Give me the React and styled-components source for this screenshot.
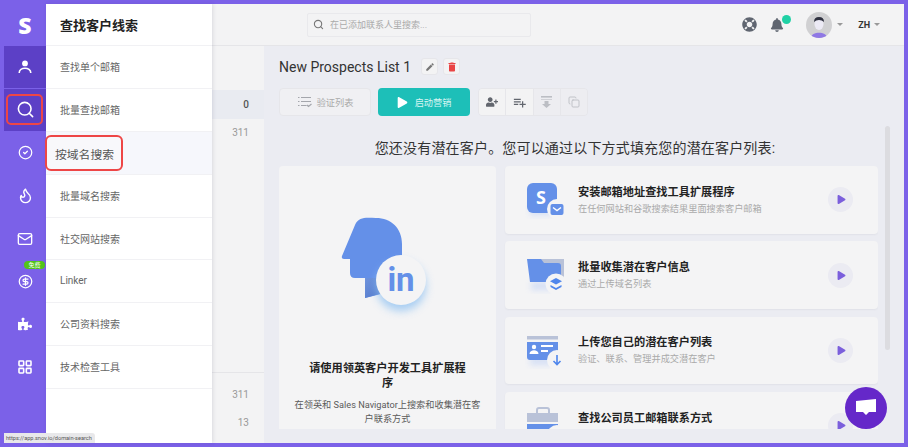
import React from "react";
import styled, { createGlobalStyle } from "styled-components";
import { Search, CircleCheck, Flame, Mail, CircleDollarSign, LayoutGrid, Copy } from "lucide-react";
import { FaBell, FaPlay, FaPuzzlePiece, FaUserPlus, FaLifeRing } from "react-icons/fa";
import { MdEdit, MdDelete, MdPlaylistAdd } from "react-icons/md";

const FONT = `Roboto, "Noto Sans CJK SC", sans-serif`;

const Global = createGlobalStyle`
  html, body { margin: 0; padding: 0; overflow: hidden; }
  * { box-sizing: border-box; }
  body { font-family: ${FONT}; }
`;

const Frame = styled.div`
  position: relative;
  width: 908px;
  height: 447px;
  padding: 4px 4px 4px 0;
  background: #7b61e8;
  display: flex;
  overflow: hidden;
`;
const Rail = styled.nav`
  width: 46px;
  flex: none;
  padding-left: 4px;
  display: flex;
  flex-direction: column;
`;
const Logo = styled.div`
  height: 42px;
  padding-bottom: 1px;
  display: flex;
  align-items: center;
  justify-content: center;
  color: #fff;
  font: 800 23px "Open Sans", sans-serif;
`;
const RailItem = styled.div`
  position: relative;
  height: 41.9px;
  margin-bottom: 1px;
  display: flex;
  align-items: center;
  justify-content: center;
  color: #fff;
  background: ${p => (p.$active ? "#5c40c6" : "transparent")};
`;
const FreeBadge = styled.span`
  position: absolute;
  top: 1px;
  right: 1px;
  width: 21px;
  height: 8px;
  border-radius: 4px;
  background: #52c41a;
  color: #fff;
  font-size: 6px;
  line-height: 8px;
  text-align: center;
`;
const Panel = styled.aside`
  width: 166px;
  flex: none;
  background: #fff;
  position: relative;
  z-index: 2;
  box-shadow: 1px 0 4px rgba(40, 40, 70, 0.12);
`;
const PanelHead = styled.h1`
  margin: 0;
  height: 42px;
  padding-left: 14px;
  display: flex;
  align-items: center;
  font-size: 13px;
  font-weight: 700;
  color: #222;
  border-bottom: 1px solid #f1f1f4;
`;
const PanelItem = styled.div`
  height: 42.9px;
  padding: 0 0 1px 14px;
  display: flex;
  align-items: center;
  font-size: 10px;
  color: #666;
  border-bottom: 1px solid #f1f1f4;
  background: ${p => (p.$active ? "#f6f7fc" : "#fff")};
`;
const Workspace = styled.div`
  flex: 1;
  min-width: 0;
  display: flex;
  flex-direction: column;
`;
const Topbar = styled.header`
  height: 42px;
  flex: none;
  background: #f3f3f4;
  border-bottom: 1px solid #e5e5e8;
  display: flex;
  align-items: center;
  padding-left: 95px;
`;
const SearchBox = styled.div`
  width: 224px;
  height: 24px;
  border: 1px solid #e9e9ec;
  border-radius: 2px;
  display: flex;
  align-items: center;
  gap: 6px;
  padding-left: 5px;
  font-size: 9px;
  color: #aaa;
`;
const TopRight = styled.div`
  margin-left: auto;
  display: flex;
  align-items: center;
  padding-right: 24px;
  color: #5f6570;
`;
const IconSlot = styled.span`
  position: relative;
  display: flex;
  margin-right: ${p => p.$mr}px;
`;
const Dot = styled.span`
  position: absolute;
  top: -3px;
  right: -7px;
  width: 9px;
  height: 9px;
  border-radius: 50%;
  background: #1fd1a5;
`;
const Caret = styled.span`
  width: 0;
  height: 0;
  border-left: 3px solid transparent;
  border-right: 3px solid transparent;
  border-top: 3px solid #999;
  margin: 0 ${p => p.$mr || 0}px 0 ${p => p.$ml || 0}px;
`;
const Lang = styled.span`
  font-size: 9px;
  font-weight: 700;
  color: #333;
`;
const Body = styled.div`
  flex: 1;
  min-height: 0;
  display: flex;
`;
const ListColumn = styled.div`
  width: 52px;
  flex: none;
  background: #f3f3f4;
  display: flex;
  flex-direction: column;
  padding-top: 44px;
`;
const ListRow = styled.div`
  height: 28.5px;
  padding-right: 15px;
  display: flex;
  align-items: center;
  justify-content: flex-end;
  font-size: 10px;
  font-weight: ${p => (p.$active ? 500 : 400)};
  color: ${p => (p.$active ? "#555" : "#999")};
  background: ${p => (p.$active ? "#e9ebf1" : "transparent")};
`;
const ListFoot = styled.div`
  margin-top: auto;
  height: 71px;
  padding-top: 7px;
  border-top: 1px solid #e5e5e8;
`;
const Content = styled.main`
  flex: 1;
  min-width: 0;
  background: #ebecf2;
  padding: 12px 0 14px 15px;
  display: flex;
  flex-direction: column;
`;
const TitleRow = styled.div`
  height: 17px;
  display: flex;
  align-items: center;
`;
const Title = styled.h2`
  margin: 0 10px 0 0;
  font-size: 14px;
  font-weight: 400;
  color: #333;
  white-space: nowrap;
`;
const TinyBtn = styled.button`
  width: 17px;
  height: 17px;
  margin-right: 5px;
  padding: 0;
  border: 1px solid #e6e6ea;
  border-radius: 3px;
  background: #f3f3f4;
  display: flex;
  align-items: center;
  justify-content: center;
  color: ${p => p.$color};
`;
const Toolbar = styled.div`
  margin-top: 13px;
  height: 28px;
  display: flex;
  gap: 7px;
`;
const GhostBtn = styled.button`
  width: 92px;
  padding: 0 0 0 1px;
  border: 1px solid #e6e6ea;
  border-radius: 4px;
  background: #f0f0f3;
  display: flex;
  align-items: center;
  justify-content: center;
  gap: 5px;
  font: 9.2px ${FONT};
  color: #aaa;
`;
const TealBtn = styled.button`
  width: 92px;
  padding: 0;
  border: 0;
  border-radius: 4px;
  background: #1dbfb8;
  display: flex;
  align-items: center;
  justify-content: center;
  gap: 7px;
  font: 9.2px ${FONT};
  color: #d9f5f3;
`;
const BtnGroup = styled.div`
  margin-left: 1px;
  width: 110px;
  display: flex;
  border: 1px solid #e6e6ea;
  border-radius: 4px;
  overflow: hidden;
`;
const GroupBtn = styled.button`
  flex: 1;
  padding: 0;
  border: 0;
  border-right: 1px solid #e6e6ea;
  background: ${p => (p.$on ? "#f3f3f4" : "#ededf1")};
  color: ${p => (p.$on ? "#62666e" : "#bcbec4")};
  display: flex;
  align-items: center;
  justify-content: center;
  &:last-child { border-right: 0; }
`;
const ScrollWrap = styled.div`
  margin-top: 10px;
  flex: 1;
  min-height: 0;
  display: flex;
  overflow: hidden;
`;
const Scroller = styled.div`
  width: 599px;
  flex: none;
  overflow: hidden;
`;
const Heading = styled.h3`
  margin: 0;
  height: 40px;
  padding: 12px 7px 0 0;
  font-size: 14px;
  line-height: 20px;
  letter-spacing: 0.18px;
  font-weight: 400;
  text-align: center;
  color: #333;
  white-space: nowrap;
`;
const CardGrid = styled.div`
  display: grid;
  grid-template-columns: 217px 373px;
  column-gap: 9px;
`;
const BigCard = styled.section`
  height: 290px;
  border-radius: 4px;
  background: #f4f4f5;
  padding-top: 40px;
  display: flex;
  flex-direction: column;
  align-items: center;
`;
const BigArt = styled.svg`
  display: block;
  margin-left: -4px;
`;
const BigTitle = styled.div`
  width: 160px;
  margin-top: 41px;
  font-size: 11.2px;
  line-height: 14.5px;
  font-weight: 700;
  text-align: center;
  color: #222;
`;
const BigSub = styled.div`
  width: 192px;
  margin-top: 7px;
  font-size: 9.2px;
  line-height: 13.5px;
  text-align: center;
  color: #5a5a5a;
`;
const CardList = styled.div`
  display: flex;
  flex-direction: column;
  gap: 7.8px;
`;
const Card = styled.section`
  height: 67.5px;
  flex: none;
  border-radius: 4px;
  background: #f4f4f5;
  box-shadow: 0 1px 2px rgba(60, 60, 90, 0.06);
  display: flex;
  align-items: center;
  padding: 0 25px 0 20px;
`;
const CardArt = styled.svg`
  flex: none;
  margin-right: 11px;
`;
const CardText = styled.div`
  flex: 1;
  min-width: 0;
`;
const CardTitle = styled.div`
  font-size: 11.2px;
  line-height: 15px;
  font-weight: 700;
  color: #222;
`;
const CardSub = styled.div`
  font-size: 9.2px;
  line-height: 13px;
  margin-top: 2px;
  color: #aaa;
`;
const PlayCircle = styled.div`
  width: 25px;
  height: 25px;
  border-radius: 50%;
  background: #ebebf2;
  color: #7b5fdc;
  display: flex;
  align-items: center;
  justify-content: center;
  padding-left: 1px;
`;
const ScrollThumb = styled.div`
  width: 5px;
  height: 224px;
  margin-left: 7px;
  border-radius: 3px;
  background: #dcdce0;
`;
const ChatFab = styled.div`
  position: absolute;
  left: 845px;
  top: 387px;
  width: 42px;
  height: 42px;
  border-radius: 50%;
  background: #6528c9;
  display: flex;
  align-items: center;
  justify-content: center;
  z-index: 4;
`;
const Highlight = styled.div`
  position: absolute;
  left: 6px;
  top: 94px;
  width: 37px;
  height: 31px;
  border: 2px solid #ee4646;
  border-radius: 5px;
  z-index: 3;
`;
const Callout = styled.div`
  position: absolute;
  left: 45px;
  top: 135px;
  width: 78px;
  height: 36px;
  padding-left: 8px;
  display: flex;
  align-items: center;
  background: #f8f8fb;
  border: 2px solid #ee4646;
  border-radius: 6px;
  font-size: 11.8px;
  color: #555;
  z-index: 3;
`;
const StatusTip = styled.div`
  position: absolute;
  left: 4px;
  top: 433px;
  width: 91px;
  height: 10px;
  padding-left: 2px;
  background: #e8e8ea;
  border-top-right-radius: 3px;
  font-size: 5.6px;
  line-height: 10px;
  color: #555;
  white-space: nowrap;
  z-index: 5;
`;

const Blue = "#6490e8";

const ArtDefs = ({ id }) => (
  <defs>
    <filter id={id} x="-40%" y="-40%" width="180%" height="180%">
      <feGaussianBlur stdDeviation="3" />
    </filter>
  </defs>
);

const ArtS = () => (
  <CardArt width="42" height="42" viewBox="0 0 42 42">
    <ArtDefs id="b1" />
    <rect x="5" y="26" width="22" height="10" fill="#b9cdf5" opacity=".55" filter="url(#b1)" />
    <rect x="2" y="4" width="30" height="30" rx="6" fill={Blue} />
    <text x="16" y="25" textAnchor="middle" fontFamily="Open Sans" fontWeight="700" fontSize="18" fill="#fff">S</text>
    <circle cx="32" cy="30" r="10" fill="#f4f4f5" />
    <rect x="25.5" y="25" width="13" height="11" rx="2" fill={Blue} />
    <path d="M28 28.5l4 3 4-3" stroke="#fff" strokeWidth="1.4" fill="none" />
  </CardArt>
);
const ArtFolder = () => (
  <CardArt width="42" height="42" viewBox="0 0 42 42">
    <ArtDefs id="b2" />
    <rect x="6" y="28" width="22" height="8" fill="#b9cdf5" opacity=".55" filter="url(#b2)" />
    <path d="M14 5h25v24H30z" fill="#b9c2d8" />
    <path d="M2 5h14l3 4h14q3 0 3 3v16H5z" fill={Blue} />
    <circle cx="31" cy="30" r="10.5" fill="#f4f4f5" />
    <path d="M31 24l6 3.2-6 3.2-6-3.2z" fill="#4f86ec" />
    <path d="M25.5 31l5.5 3 5.5-3v2l-5.5 3-5.5-3z" fill="#4f86ec" />
  </CardArt>
);
const ArtId = () => (
  <CardArt width="42" height="42" viewBox="0 0 42 42">
    <ArtDefs id="b3" />
    <rect x="5" y="28" width="22" height="8" fill="#b9cdf5" opacity=".55" filter="url(#b3)" />
    <rect x="2" y="7" width="31" height="3.5" fill="#b9c2d8" />
    <path d="M2 13h31v15q0 3-3 3H5q-3 0-3-3z" fill={Blue} />
    <circle cx="9" cy="18" r="2.2" fill="#fff" />
    <path d="M4.5 25c0-5 9-5 9 0z" fill="#fff" />
    <rect x="16" y="16" width="12" height="2" fill="#fff" />
    <rect x="16" y="21" width="7" height="2" fill="#fff" />
    <circle cx="32" cy="31" r="10" fill="#f4f4f5" />
    <path d="M32 26v9M28.5 32l3.5 3.5 3.5-3.5" stroke="#4f86ec" strokeWidth="1.6" fill="none" />
  </CardArt>
);
const ArtCase = () => (
  <CardArt width="42" height="42" viewBox="0 0 42 42">
    <path d="M12 8V5q0-2 2-2h8q2 0 2 2v3" stroke="#b9c2d8" strokeWidth="2" fill="none" />
    <path d="M2 8h31v9H2z" fill="#b9c2d8" />
    <path d="M2 19h31v13H2z" fill={Blue} />
    <circle cx="32" cy="30" r="10" fill="#f4f4f5" />
    <circle cx="32" cy="30" r="5" fill="#4f86ec" />
  </CardArt>
);

const LinkedInArt = () => (
  <BigArt width="110" height="115" viewBox="0 0 110 115">
    <defs>
      <filter id="glow" x="-40%" y="-40%" width="180%" height="180%">
        <feGaussianBlur stdDeviation="4" />
      </filter>
      <linearGradient id="neck" x1="0" y1="0" x2="1" y2="1">
        <stop offset="0" stopColor="#6f93dc" />
        <stop offset="1" stopColor="#4d74c8" />
      </linearGradient>
    </defs>
    <path d="M34 92V72H24q-5 0-5-5V53h-6q-3 0-2-3L24 19C28 10 36 12 45 12C60 12 71 22 71 38V60L50 88Z" fill={Blue} />
    <path d="M34 92V72H52V87Z" fill="url(#neck)" />
    <circle cx="70" cy="80" r="25" fill="#8ec1f2" opacity=".75" filter="url(#glow)" />
    <circle cx="70" cy="74" r="25" fill="#f4f4f5" />
    <text x="70" y="85" textAnchor="middle" fontFamily="Roboto" fontWeight="700" fontSize="33" fill={Blue}>in</text>
  </BigArt>
);

const ProfileIcon = () => (
  <svg width="14" height="14" viewBox="0 0 14 14">
    <circle cx="7" cy="3.4" r="2.9" fill="#fff" />
    <path d="M1.2 13c0-6.4 11.6-6.4 11.6 0" stroke="#fff" strokeWidth="1.6" fill="none" />
  </svg>
);
const VerifyIcon = () => (
  <svg width="14" height="12" viewBox="0 0 14 12" stroke="#a4a6ac" strokeWidth="1.2" fill="none">
    <path d="M0 1.5h1.5M3 1.5h10M0 5.5h1.5M3 5.5h10M0 9.5h1.5M3 9.5h5.5M9 9l1.5 1.5L13.5 8" />
  </svg>
);
const ToBottomIcon = () => (
  <svg width="11" height="12" viewBox="0 0 11 12" fill="currentColor">
    <rect x="0" y="0" width="11" height="1.6" />
    <rect x="0" y="3" width="11" height="1" opacity=".6" />
    <path d="M3.5 5h4v3H10l-4.5 4L1 8h2.5z" />
  </svg>
);

const menu = ["查找单个邮箱", "批量查找邮箱", "按域名搜索", "批量域名搜索", "社交网站搜索", "Linker", "公司资料搜索", "技术检查工具"];
const cards = [
  { art: <ArtS />, title: "安装邮箱地址查找工具扩展程序", sub: "在任何网站和谷歌搜索结果里面搜索客户邮箱" },
  { art: <ArtFolder />, title: "批量收集潜在客户信息", sub: "通过上传域名列表" },
  { art: <ArtId />, title: "上传您自己的潜在客户列表", sub: "验证、联系、管理并成交潜在客户" },
  { art: <ArtCase />, title: "查找公司员工邮箱联系方式", sub: "\u00a0" },
];

export default function App() {
  return (
    <Frame>
      <Global />
      <Rail>
        <Logo>S</Logo>
        <RailItem $active><ProfileIcon /></RailItem>
        <RailItem $active><Search size={19} strokeWidth={2} /></RailItem>
        <RailItem><CircleCheck size={15} strokeWidth={2} /></RailItem>
        <RailItem><Flame size={17} strokeWidth={2} /></RailItem>
        <RailItem><Mail size={16} strokeWidth={2} /></RailItem>
        <RailItem><FreeBadge>免费</FreeBadge><CircleDollarSign size={15} strokeWidth={2} /></RailItem>
        <RailItem><FaPuzzlePiece size={14} /></RailItem>
        <RailItem><LayoutGrid size={16} strokeWidth={2.4} /></RailItem>
      </Rail>
      <Panel>
        <PanelHead>查找客户线索</PanelHead>
        {menu.map((m, i) => <PanelItem key={m} $active={i === 2}>{i === 2 ? "" : m}</PanelItem>)}
      </Panel>
      <Workspace>
        <Topbar>
          <SearchBox><Search size={11} color="#777" strokeWidth={2.4} />在已添加联系人里搜索...</SearchBox>
          <TopRight>
            <IconSlot $mr={13}><FaLifeRing size={15} /></IconSlot>
            <IconSlot $mr={22}><FaBell size={14} /><Dot /></IconSlot>
            <svg width="26" height="26" viewBox="0 0 26 26">
              <circle cx="13" cy="13" r="13" fill="#d0d0d2" />
              <clipPath id="av"><circle cx="13" cy="13" r="13" /></clipPath>
              <g clipPath="url(#av)">
                <path d="M5 26c0-7 16-7 16 0z" fill="#8f78e4" />
                <ellipse cx="13" cy="12" rx="4.5" ry="6" fill="#eceaf5" />
                <path d="M8 10q0-5 5-5t5 5q-2-2-5-2t-5 2z" fill="#2f3140" />
              </g>
            </svg>
            <Caret $ml={5} $mr={15} />
            <Lang>ZH</Lang>
            <Caret $ml={4} />
          </TopRight>
        </Topbar>
        <Body>
          <ListColumn>
            <ListRow $active>0</ListRow>
            <ListRow>311</ListRow>
            <ListFoot>
              <ListRow>311</ListRow>
              <ListRow>13</ListRow>
            </ListFoot>
          </ListColumn>
          <Content>
            <TitleRow>
              <Title>New Prospects List 1</Title>
              <TinyBtn $color="#777"><MdEdit size={10} /></TinyBtn>
              <TinyBtn $color="#e94444"><MdDelete size={12} /></TinyBtn>
            </TitleRow>
            <Toolbar>
              <GhostBtn><VerifyIcon />验证列表</GhostBtn>
              <TealBtn><FaPlay size={11} color="#fff" />启动营销</TealBtn>
              <BtnGroup>
                <GroupBtn $on><FaUserPlus size={12} /></GroupBtn>
                <GroupBtn $on><MdPlaylistAdd size={15} /></GroupBtn>
                <GroupBtn><ToBottomIcon /></GroupBtn>
                <GroupBtn><Copy size={12} strokeWidth={1.8} /></GroupBtn>
              </BtnGroup>
            </Toolbar>
            <ScrollWrap>
              <Scroller>
                <Heading>您还没有潜在客户。您可以通过以下方式填充您的潜在客户列表:</Heading>
                <CardGrid>
                  <BigCard>
                    <LinkedInArt />
                    <BigTitle>请使用领英客户开发工具扩展程序</BigTitle>
                    <BigSub>在领英和 Sales Navigator上搜索和收集潜在客户联系方式</BigSub>
                  </BigCard>
                  <CardList>
                    {cards.map(c => (
                      <Card key={c.title}>
                        {c.art}
                        <CardText>
                          <CardTitle>{c.title}</CardTitle>
                          <CardSub>{c.sub}</CardSub>
                        </CardText>
                        <PlayCircle><FaPlay size={9} /></PlayCircle>
                      </Card>
                    ))}
                  </CardList>
                </CardGrid>
              </Scroller>
              <ScrollThumb />
            </ScrollWrap>
          </Content>
        </Body>
      </Workspace>
      <Highlight />
      <Callout>按域名搜索</Callout>
      <ChatFab>
        <svg width="22" height="20" viewBox="0 0 22 20">
          <path d="M1 3l20-2v13h-7l-3 3-3-3-7 0z" fill="#fff" />
        </svg>
      </ChatFab>
      <StatusTip>https://app.snov.io/domain-search</StatusTip>
    </Frame>
  );
}
